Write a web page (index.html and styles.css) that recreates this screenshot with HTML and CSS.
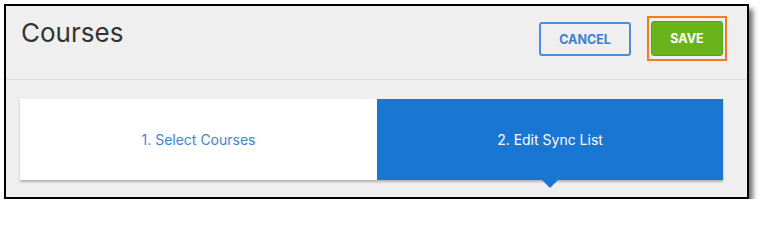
FILE: index.html
```html
<!DOCTYPE html>
<html>
<head>
<meta charset="utf-8">
<link rel="stylesheet" href="styles.css">
</head>
<body>
<div class="frame">
  <div class="header">
    <h1 class="title">Courses</h1>
    <div class="actions">
      <button class="btn btn-cancel">CANCEL</button>
      <span class="highlight"><button class="btn btn-save">SAVE</button></span>
    </div>
  </div>
  <div class="content">
    <div class="steps">
      <div class="step">1. Select Courses</div>
      <div class="step step-active">2. Edit Sync List</div>
    </div>
  </div>
</div>
</body>
</html>
```
FILE: styles.css
```css
html, body {
  margin: 0;
  padding: 0;
  background: #ffffff;
}
body {
  padding: 4px 0 0 4px;
  font-family: Inter, Lato, sans-serif;
}
.frame {
  width: 741px;
  height: 191px;
  border: 2px solid #000;
  background: #efefef;
  box-shadow: 4px 5px 5px rgba(0, 0, 0, 0.55);
  display: flex;
  flex-direction: column;
}
.header {
  height: 74px;
  box-sizing: border-box;
  border-bottom: 1px solid #dedede;
  display: flex;
  justify-content: space-between;
  align-items: flex-start;
  padding: 0 20px 0 15px;
}
.title {
  margin: 0;
  padding-top: 11px;
  font-size: 26px;
  font-weight: 400;
  color: #333333;
  line-height: 32px;
}
.actions {
  display: flex;
  align-items: flex-start;
  gap: 16px;
  padding-top: 10px;
}
.btn {
  font-family: Inter, Lato, sans-serif;
  font-weight: 700;
  font-size: 12.5px;
  border-radius: 3px;
  cursor: pointer;
  padding: 0;
}
.btn-cancel {
  margin-top: 6px;
  width: 92px;
  height: 34px;
  background: transparent;
  border: 2px solid #4a8fdd;
  color: #3a7fd6;
}
.highlight {
  display: block;
  border: 2px solid #f47c20;
  padding: 3px 2px 3px 2px;
  line-height: 0;
}
.btn-save {
  width: 72px;
  height: 35px;
  background: #6ab41b;
  border: 1px solid #5f9f1a;
  color: #ffffff;
  line-height: normal;
}
.content {
  padding: 19px 24px 0 14px;
}
.steps {
  display: flex;
  height: 81px;
  box-shadow: 0 2px 2px rgba(0, 0, 0, 0.25);
}
.step {
  flex: 0 0 357px;
  display: flex;
  align-items: center;
  justify-content: center;
  background: #ffffff;
  color: #3f83d8;
  font-size: 14px;
}
.step-active {
  flex: 1 1 auto;
  background: #1976d2;
  color: #ffffff;
  position: relative;
}
.step-active::after {
  content: "";
  position: absolute;
  left: 50%;
  bottom: -8px;
  margin-left: -8px;
  border-left: 8px solid transparent;
  border-right: 8px solid transparent;
  border-top: 8px solid #1976d2;
}
```
